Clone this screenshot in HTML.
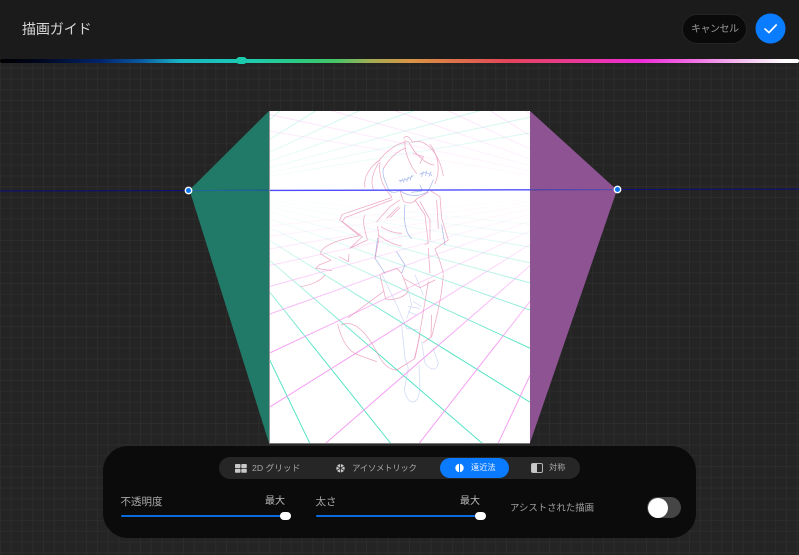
<!DOCTYPE html>
<html lang="ja"><head><meta charset="utf-8"><title>描画ガイド</title>
<style>
*{box-sizing:border-box}
html,body{margin:0;padding:0;width:799px;height:555px;overflow:hidden;background:#242424;font-family:"Liberation Sans","Noto Sans CJK JP",sans-serif}
#bg{position:absolute;left:0;top:58px;width:799px;height:497px;background-color:#242424;background-image:linear-gradient(to right,#2c2c2c 1px,transparent 1px),linear-gradient(to bottom,#2c2c2c 1px,transparent 1px);background-size:10.78px 10.78px;background-position:0 -1px}
#hd{position:absolute;left:0;top:0;width:799px;height:59px;background:#1b1b1b}
#hue{position:absolute;left:0;top:58.5px;width:799px;height:4px;border-radius:2px;background:linear-gradient(to right,#000 0,#00071f 40px,#00246b 100px,#0a58a0 140px,#18b4c4 180px,#1bcbb6 241px,#2bcb82 300px,#45c668 335px,#a3ae55 370px,#da9645 410px,#df6a4c 465px,#e4435c 510px,#e93a92 570px,#ef2cd8 640px,#f06ae4 690px,#f4bcf0 740px,#fff 785px)}
#thumb{position:absolute;left:236px;top:57px;width:11px;height:7px;border-radius:3.5px;background:#1ccbae}
.t{position:absolute;white-space:nowrap;line-height:1}
#can{position:absolute;left:0;top:0}
#panel{position:absolute;left:103px;top:446px;width:593px;height:92px;border-radius:25px;background:#0b0b0b}
#tabs{position:absolute;left:219px;top:457px;width:361px;height:22px;border-radius:11px;background:#262626}
#act{position:absolute;left:440px;top:458px;width:69px;height:20px;border-radius:10px;background:#0a7aff}
.tr{position:absolute;height:2px;top:515px;background:#0b6ade;border-radius:1px}
.th{position:absolute;top:512px;width:11px;height:7.5px;border-radius:4px;background:#fff}
</style></head><body>
<div id="bg"></div>
<svg id="can" width="799" height="555" viewBox="0 0 799 555">
<defs>
<clipPath id="cp"><rect x="269" y="111" width="261" height="332"/></clipPath>
<linearGradient id="gc" gradientUnits="userSpaceOnUse" x1="0" y1="111" x2="0" y2="443">
<stop offset="0" stop-color="#54e3c4" stop-opacity=".3"/><stop offset=".238" stop-color="#54e3c4" stop-opacity="0"/><stop offset=".36" stop-color="#54e3c4" stop-opacity=".1"/><stop offset=".52" stop-color="#54e3c4" stop-opacity=".5"/><stop offset=".72" stop-color="#54e3c4" stop-opacity="1"/></linearGradient>
<linearGradient id="gm" gradientUnits="userSpaceOnUse" x1="0" y1="111" x2="0" y2="443">
<stop offset="0" stop-color="#f59ff3" stop-opacity=".3"/><stop offset=".238" stop-color="#f59ff3" stop-opacity="0"/><stop offset=".36" stop-color="#f59ff3" stop-opacity=".12"/><stop offset=".52" stop-color="#f59ff3" stop-opacity=".55"/><stop offset=".72" stop-color="#f59ff3" stop-opacity="1"/></linearGradient>
</defs>
<polygon points="189.5,190 269,111 269,443" fill="#207a67"/>
<polygon points="617,190 530,111 530,443" fill="#8e5393"/>
<line x1="0" y1="191" x2="799" y2="189.1" stroke="#0c0c80" stroke-width="1"/>
<line x1="190" y1="190.5" x2="269" y2="190.3" stroke="#2268a0" stroke-width="1"/>
<line x1="530" y1="189.7" x2="615" y2="189.5" stroke="#5a4fb0" stroke-width="1"/>
<rect x="269" y="111" width="261" height="332" fill="#fff"/>
<g clip-path="url(#cp)" fill="none">
<path stroke="url(#gc)" stroke-width="1" d="M188 190L313 450M188 190L396 450M188 190L490 450M188 190L607 450M188 190L750 450M188 190L929 450M188 190L1145 450M188 190L1410 450M188 190L1748 450M188 190L2190 450M188 190L2788 450"/>
<path stroke="url(#gm)" stroke-width="1" d="M617 190L495 450M617 190L414 450M617 190L318 450M617 190L201 450M617 190L63 450M617 190L-111 450M617 190L-319 450M617 190L-579 450M617 190L-917 450M617 190L-1333 450M617 190L-1905 450"/>
<path stroke="url(#gc)" stroke-width="1" d="M188 190L313 -70M188 190L396 -70M188 190L490 -70M188 190L607 -70M188 190L750 -70M188 190L929 -70M188 190L1145 -70M188 190L1410 -70M188 190L1748 -70"/>
<path stroke="url(#gm)" stroke-width="1" d="M617 190L495 -70M617 190L414 -70M617 190L318 -70M617 190L201 -70M617 190L63 -70M617 190L-111 -70M617 190L-319 -70M617 190L-579 -70M617 190L-917 -70"/>
</g>
<g transform="translate(265 105) scale(.3333)" fill="none" stroke-linecap="round" stroke-linejoin="round">
<g stroke="#8ea4e6" stroke-width="2.4" opacity=".7">
<path d="M355 190C350 215 365 235 372 258C385 265 398 262 405 256"/>
<path d="M405 256C425 275 465 278 490 258L505 225"/>
<path d="M402 226C415 228 430 222 445 212M405 232L412 222M415 232L420 220M425 230L430 216M435 226L440 212"/>
<path d="M465 208C475 200 490 202 500 212M470 215L475 200M482 212L485 198M492 214L498 200"/>
<path d="M465 240L472 256M440 262L470 258"/>
<path d="M420 300C415 340 420 385 440 400M530 360L540 420M338 400L330 460L360 505M395 440L420 480L410 505"/>
</g>
<g stroke="#e88ab2" stroke-width="2.3" opacity=".72">
<path d="M416 100C425 88 436 98 442 112C470 98 520 130 535 212"/>
<path d="M340 170C365 135 400 112 430 110"/>
<path d="M495 118C520 150 528 195 510 236"/>
<path d="M345 165C320 180 293 215 300 247"/>
<path d="M340 175C325 200 315 230 325 252"/>
<path d="M345 172C340 210 352 245 380 275"/>
<path d="M356 190C372 160 405 132 422 130"/>
<path d="M420 105C415 140 440 190 455 205"/>
<path d="M432 112C450 150 485 178 507 180"/>
<path d="M445 145L475 155L465 175"/>
<path d="M405 256L415 288C430 298 445 295 455 282L490 262"/>
<path d="M380 278L232 328L224 345L283 392L246 400C205 410 165 428 167 447L198 466L162 480L153 490L200 497"/>
<path d="M382 284L240 338L232 350L292 395L255 430"/>
<path d="M300 330C290 350 300 375 307 405L258 428"/>
<path d="M222 455L250 470L252 448"/>
<path d="M405 285L375 305L335 350M365 340L400 305M375 338L405 308"/>
<path d="M348 365C370 380 395 385 410 385M340 390C365 410 390 420 410 423"/>
<path d="M338 365L342 400L330 460"/>
<path d="M450 285L480 330L490 415L480 418"/>
<path d="M465 290L495 345L495 405"/>
<path d="M498 258L525 275L530 340L550 405L510 432L525 470L535 505"/>
<path d="M515 285L520 370"/>
<path d="M490 430L495 505"/>
<path d="M350 505L395 490L410 505"/>
</g>
</g>
<g transform="translate(265 275) scale(.3333)" fill="none" stroke-linecap="round" stroke-linejoin="round">
<g stroke="#b8c5f0" stroke-width="2.2" opacity=".65">
<path d="M352 0L395 90L425 160L460 165"/>
<path d="M432 55L440 90L425 130M445 80L470 95M430 95L465 100M430 110L455 120"/>
<path d="M410 150L420 250L430 280L418 345C425 380 445 392 458 370L465 345L462 270"/>
<path d="M470 200L480 265C495 285 515 290 520 265L505 220"/>
<path d="M450 0L475 60"/>
</g>
<g stroke="#e88ab2" stroke-width="2.3" opacity=".72">
<path d="M108 35C140 30 170 15 180 0"/>
<path d="M345 0L362 72C390 78 420 65 430 48L412 0"/>
<path d="M355 50L250 128"/>
<path d="M218 148C230 195 250 230 280 240L335 260"/>
<path d="M228 150C270 130 310 180 340 240C355 270 375 285 395 285L448 252L460 200L490 20"/>
<path d="M535 0C530 60 522 100 500 185L475 203"/>
<path d="M415 10L465 38L510 15"/>
<path d="M500 120L498 185"/>
<path d="M465 180L450 250"/>
</g>
</g>
<line x1="269" y1="190.4" x2="530" y2="189.8" stroke="#4c4cff" stroke-width="1.4"/>
<line x1="269.5" y1="111" x2="269.5" y2="443" stroke="#9a9a9a" stroke-width="1"/>
<line x1="269" y1="443.5" x2="530" y2="443.5" stroke="#777" stroke-width="1"/>
<circle cx="188.5" cy="190.5" r="3.2" fill="#0a74f0" stroke="#fff" stroke-width="1.4"/>
<circle cx="617.5" cy="189.5" r="3.2" fill="#0a74f0" stroke="#fff" stroke-width="1.4"/>
</svg>
<div id="hd"></div>
<div id="hue"></div>
<div id="thumb"></div>
<div class="t" style="left:22px;top:21.5px;font-size:14px;letter-spacing:-.1px;color:#d6d6d6;font-weight:400">描画ガイド</div>
<div style="position:absolute;left:682px;top:13.5px;width:65px;height:30.5px;border-radius:15.5px;background:#0a0a0a;border:1px solid #242424"></div>
<div class="t" style="left:691px;top:24.5px;font-size:10px;color:#9a9a9a;letter-spacing:-.5px">キャンセル</div>
<svg style="position:absolute;left:755px;top:13px" width="31" height="31" viewBox="0 0 31 31"><circle cx="15.5" cy="15.5" r="15" fill="#0a7cff"/><path d="M10 16l4 3.6 7.2-7.6" fill="none" stroke="#fff" stroke-width="1.7" stroke-linecap="round" stroke-linejoin="round"/></svg>
<div id="panel"></div>
<div id="tabs"></div>
<div id="act"></div>
<svg style="position:absolute;left:0;top:440px" width="799" height="50" viewBox="0 440 799 50">
<g fill="#c9c9c9"><rect x="235" y="464" width="5.5" height="4" rx=".8"/><rect x="241.3" y="464" width="5.5" height="4" rx=".8"/><rect x="235" y="468.8" width="5.5" height="4" rx=".8"/><rect x="241.3" y="468.8" width="5.5" height="4" rx=".8"/></g>
<circle cx="340.5" cy="468.3" r="4.2" fill="#c9c9c9"/><path d="M340.5 464v8.6M336.8 466.2l7.4 4.2M336.8 470.4l7.4-4.2" stroke="#262626" stroke-width=".8"/>
<circle cx="459.5" cy="468" r="4.2" fill="#fff"/><rect x="459" y="463.5" width="1" height="9" fill="#0a7aff"/>
<rect x="531.5" y="463.5" width="11" height="9" rx="1.5" fill="none" stroke="#b5b5b5" stroke-width="1"/><path d="M533 463.5h4v9h-4a1.5 1.5 0 0 1-1.5-1.5v-6a1.5 1.5 0 0 1 1.5-1.5z" fill="#c9c9c9"/>
</svg>
<div class="t" style="left:252px;top:464px;font-size:8.7px;color:#a8a8a8">2D グリッド</div>
<div class="t" style="left:352px;top:464px;font-size:8.4px;color:#a8a8a8;letter-spacing:-.25px">アイソメトリック</div>
<div class="t" style="left:471px;top:464px;font-size:8.2px;color:#e4efff">遠近法</div>
<div class="t" style="left:549px;top:464px;font-size:8.2px;color:#a8a8a8">対称</div>
<div class="t" style="left:120.5px;top:496.5px;font-size:10.5px;color:#a8a8a8">不透明度</div>
<div class="t" style="left:265px;top:496.5px;font-size:10px;color:#bdbdbd">最大</div>
<div class="t" style="left:315.5px;top:496.5px;font-size:10.5px;color:#a8a8a8">太さ</div>
<div class="t" style="left:460px;top:496.5px;font-size:10px;color:#bdbdbd">最大</div>
<div class="t" style="left:510px;top:503px;font-size:9.4px;color:#a0a0a0">アシストされた描画</div>
<div class="tr" style="left:120.5px;width:162px"></div><div class="th" style="left:280px"></div>
<div class="tr" style="left:315.5px;width:162px"></div><div class="th" style="left:475px"></div>
<div style="position:absolute;left:647px;top:497px;width:34px;height:21px;border-radius:10.5px;background:#454545"></div>
<div style="position:absolute;left:647.5px;top:497.5px;width:20px;height:20px;border-radius:50%;background:#fff"></div>
</body></html>
